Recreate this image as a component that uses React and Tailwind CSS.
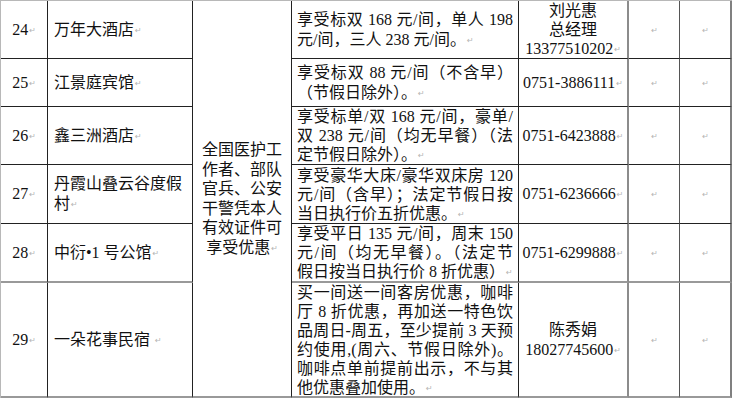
import React from "react";

// little Word paragraph mark after each cell's text
function Mark() {
  return (
    <span className="ml-px align-middle font-['DejaVu_Sans',sans-serif] text-[8px] leading-none text-[#b4b4b4]">
      ↵
    </span>
  );
}

function Lines({ lines, justify = true }) {
  return lines.map((line, i) => {
    const last = i === lines.length - 1;
    return (
      <div
        key={i}
        className={
          justify && !last ? "text-justify [text-align-last:justify]" : ""
        }
      >
        {line}
        {last && <Mark />}
      </div>
    );
  });
}

const rows = [
  {
    no: "24",
    name: ["万年大酒店"],
    desc: ["享受标双 168 元/间，单人 198", "元/间，三人 238 元/间。"],
    contact: ["刘光惠", "总经理", "13377510202"],
    lead: "leading-[20px]",
  },
  {
    no: "25",
    name: ["江景庭宾馆"],
    desc: ["享受标双 88 元/间（不含早）", "（节假日除外）。"],
    contact: ["0751-3886111"],
    lead: "leading-[20px]",
  },
  {
    no: "26",
    name: ["鑫三洲酒店"],
    desc: [
      "享受标单/双 168 元/间，豪单/",
      "双 238 元/间（均无早餐）（法",
      "定节假日除外）。",
    ],
    contact: ["0751-6423888"],
    lead: "leading-[19px]",
  },
  {
    no: "27",
    name: ["丹霞山叠云谷度假", "村"],
    desc: [
      "享受豪华大床/豪华双床房 120",
      "元/间（含早）；法定节假日按",
      "当日执行价五折优惠。",
    ],
    contact: ["0751-6236666"],
    lead: "leading-[19px]",
  },
  {
    no: "28",
    name: ["中衍•1 号公馆"],
    desc: [
      "享受平日 135 元/间，周末 150",
      "元/间（均无早餐）。（法定节",
      "假日按当日执行价 8 折优惠）",
    ],
    contact: ["0751-6299888"],
    lead: "leading-[19px]",
    grayBottom: true,
  },
  {
    no: "29",
    name: ["一朵花事民宿 "],
    desc: [
      "买一间送一间客房优惠，咖啡",
      "厅 8 折优惠，再加送一特色饮",
      "品周日-周五，至少提前 3 天预",
      "约使用,(周六、节假日除外)。",
      "咖啡点单前提前出示，不与其",
      "他优惠叠加使用。",
    ],
    contact: ["陈秀娟", "18027745600"],
    lead: "leading-[19px]",
    grayBottom: true,
  },
];

export default function App() {
  const cell =
    "flex flex-col justify-center border-r border-b border-[#222] overflow-visible";

  return (
    <div className="w-[732px] h-[400px] bg-white overflow-hidden">
      <div className="grid w-[732px] grid-cols-[47px_145px_99px_227px_110px_51px_52px] grid-rows-[58px_48px_58px_59px_59px_115px] border-l border-t border-[#b8b8b8] text-[16px] text-[#111] font-['Liberation_Serif','Noto_Sans_CJK_SC',serif]">
        {rows.map((r, idx) => {
          const bottom = r.grayBottom ? "border-b-2 border-b-[#999]" : "";
          return (
            <React.Fragment key={r.no}>
              <div className={`${cell} ${bottom} px-1 text-center leading-[20px]`}>
                <div>
                  {r.no}
                  <Mark />
                </div>
              </div>
              <div className={`${cell} ${bottom} px-[6px] leading-[20px]`}>
                <Lines lines={r.name} justify={false} />
              </div>
              {idx === 0 && (
                <div
                  className={`${cell} row-span-6 border-b-2 border-b-[#999] px-1 text-center leading-[19.5px]`}
                >
                  <div>全国医护工</div>
                  <div>作者、部队</div>
                  <div>官兵、公安</div>
                  <div>干警凭本人</div>
                  <div>有效证件可</div>
                  <div>
                    享受优惠
                    <Mark />
                  </div>
                </div>
              )}
              <div className={`${cell} ${bottom} px-[5px] ${r.lead}`}>
                <Lines lines={r.desc} />
              </div>
              <div
                className={`${cell} ${bottom} border-r-2 border-r-[#8c8c8c] text-center whitespace-nowrap ${
                  r.contact.length > 2 ? "leading-[19px]" : "leading-[20px]"
                }`}
              >
                <Lines lines={r.contact} justify={false} />
              </div>
              <div className={`${cell} ${bottom} border-r-[#555] text-center leading-[20px]`}>
                <div>
                  <Mark />
                </div>
              </div>
              <div
                className={`${cell} ${bottom} border-r-2 border-r-[#808080] text-center leading-[20px]`}
              >
                <div>
                  <Mark />
                </div>
              </div>
            </React.Fragment>
          );
        })}
      </div>
    </div>
  );
}
